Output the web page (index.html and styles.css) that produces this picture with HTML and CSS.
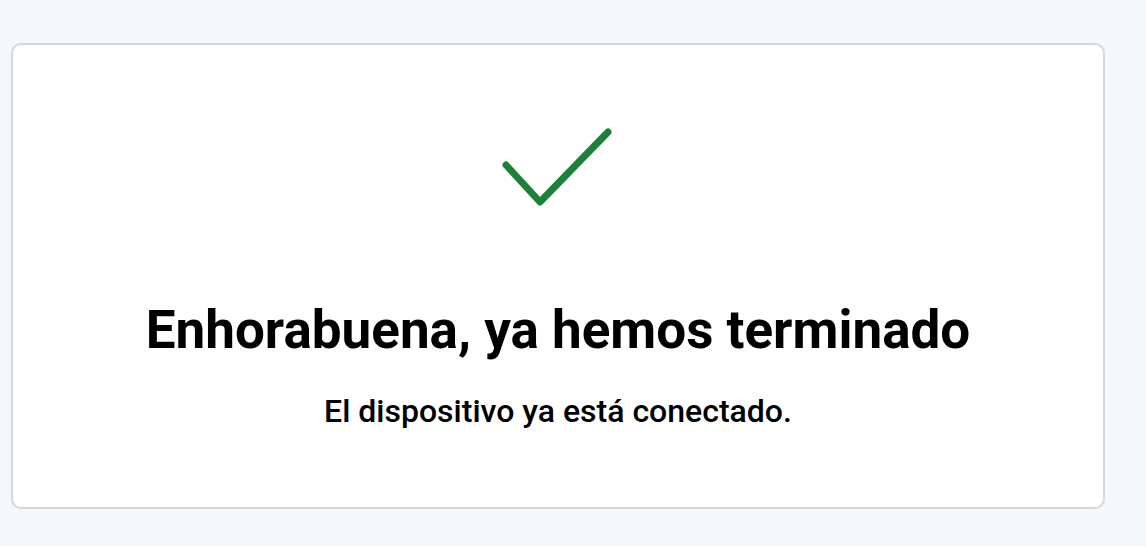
FILE: index.html
```html
<!DOCTYPE html>
<html lang="es">
<head>
<meta charset="utf-8">
<title>Conexión completada</title>
<link rel="stylesheet" href="styles.css">
</head>
<body>
	<main class="page">
		<section class="done_card">
			<svg class="done_icon" width="120" height="82" viewBox="0 0 120 82" aria-hidden="true">
				<polyline points="8,38 42,75 110,5" fill="none" stroke="#1d8038" stroke-width="7" stroke-linecap="round" stroke-linejoin="round"/>
			</svg>
			<h1 class="done_title">Enhorabuena, ya hemos terminado</h1>
			<p class="done_text">El dispositivo ya está conectado.</p>
		</section>
	</main>
</body>
</html>
```
FILE: styles.css
```css
html, body{
	margin:0;
	padding:0;
	background:#f6f7f9;
	font-family: Roboto, "Liberation Sans", sans-serif;
	color:#000;
}
.page{
	padding:43px 41px 37px 11px;
}
.done_card{
	box-sizing:border-box;
	height:466px;
	background:#fff;
	border:2px solid #d3d8de;
	border-radius:10px;
	display:flex;
	flex-direction:column;
	align-items:center;
	padding-top:82px;
}
.done_icon{
	display:block;
}
.done_title{
	margin:90px 0 0 0;
	font-size:53px;
	font-weight:700;
	line-height:62px;
}
.done_text{
	margin:32px 0 0 0;
	font-size:32px;
	font-weight:500;
	line-height:37px;
}
```
